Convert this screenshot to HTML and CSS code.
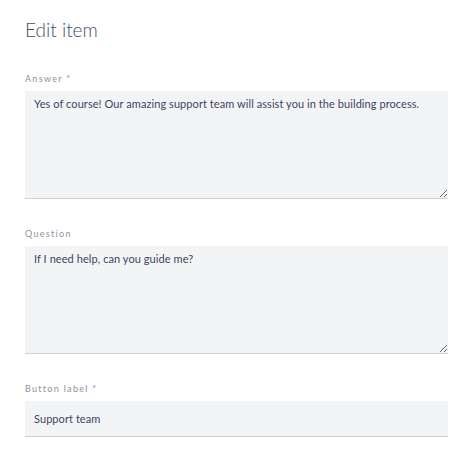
FILE: index.html
```html
<!DOCTYPE html>
<html lang="en">
<head>
<meta charset="utf-8">
<title>Edit item</title>
<link rel="stylesheet" href="styles.css">
</head>
<body>
<div class="panel">
  <h1 class="title">Edit item</h1>
  <div class="field">
    <label class="label" for="answer">Answer *</label>
    <textarea class="control area" id="answer">Yes of course! Our amazing support team will assist you in the building process.</textarea>
  </div>
  <div class="field">
    <label class="label" for="question">Question</label>
    <textarea class="control area" id="question">If I need help, can you guide me?</textarea>
  </div>
  <div class="field">
    <label class="label" for="button">Button label *</label>
    <input class="control input" id="button" type="text" value="Support team">
  </div>
</div>
</body>
</html>
```

FILE: styles.css
```css
html, body {
  margin: 0;
  padding: 0;
  background: #ffffff;
}

body {
  font-family: Lato, "Noto Sans", sans-serif;
}

.panel {
  padding: 18px 18px 0 25px;
}

.title {
  margin: 0 0 30px;
  font-size: 19px;
  line-height: 24px;
  font-weight: 300;
  color: #47506a;
}

.field {
  display: flex;
  flex-direction: column;
}

.field + .field {
  margin-top: 28px;
}

.label {
  font-size: 9px;
  line-height: 13px;
  letter-spacing: 1.3px;
  color: #8b93a3;
  margin-bottom: 6px;
}

.control {
  box-sizing: border-box;
  width: 100%;
  margin: 0;
  border: 0;
  border-bottom: 1px solid #ccd0d7;
  border-radius: 0;
  background: #f3f4f6;
  font-family: Lato, "Noto Sans", sans-serif;
  font-size: 11px;
  letter-spacing: 0.07px;
  color: #3c4560;
  outline: none;
}

.area {
  height: 108px;
  padding: 5px 9px;
  line-height: 16px;
  resize: vertical;
  display: block;
}

.input {
  height: 36px;
  padding: 0 9px;
  line-height: 16px;
}
```
